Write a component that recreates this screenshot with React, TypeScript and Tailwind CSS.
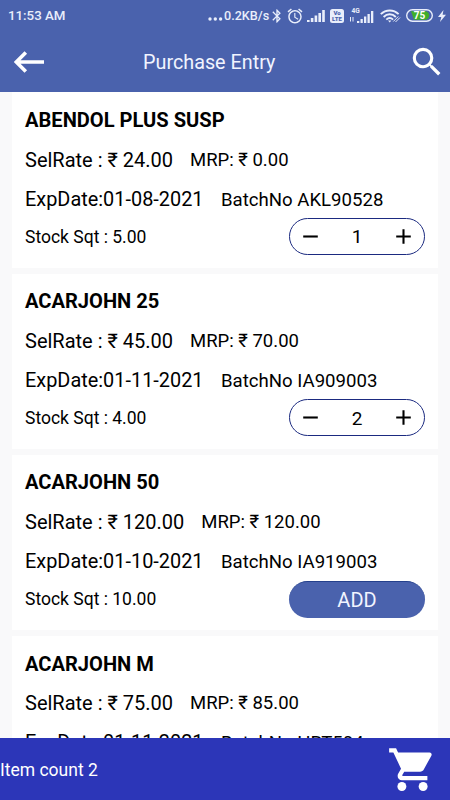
import { useState } from "react";
import { MdAdd, MdAlarm, MdBluetooth, MdRemove, MdSearch } from "react-icons/md";

interface Item {
  name: string;
  selRate: string;
  mrp: string;
  expDate: string;
  batchNo: string;
  stock: string;
  qty: number;
}

const initialItems: Item[] = [
  { name: "ABENDOL PLUS SUSP", selRate: "24.00", mrp: "0.00", expDate: "01-08-2021", batchNo: "AKL90528", stock: "5.00", qty: 1 },
  { name: "ACARJOHN 25", selRate: "45.00", mrp: "70.00", expDate: "01-11-2021", batchNo: "IA909003", stock: "4.00", qty: 2 },
  { name: "ACARJOHN 50", selRate: "120.00", mrp: "120.00", expDate: "01-10-2021", batchNo: "IA919003", stock: "10.00", qty: 0 },
  { name: "ACARJOHN M", selRate: "75.00", mrp: "85.00", expDate: "01-11-2021", batchNo: "HRT504", stock: "", qty: 0 },
];

function SignalBars() {
  return (
    <svg className="w-[18px] h-3 shrink-0" viewBox="0 0 18 12" fill="currentColor">
      <rect x="0" y="10" width="2.6" height="2" />
      <rect x="3.8" y="8" width="2.6" height="4" />
      <rect x="7.6" y="5.5" width="2.6" height="6.5" />
      <rect x="11.4" y="3" width="2.6" height="9" />
      <rect x="15.2" y="0" width="2.6" height="12" />
    </svg>
  );
}

function StatusBar() {
  return (
    <div className="flex items-center h-[31px] pl-2 pr-1 text-[#e9eefb]">
      <span className="text-[13.3px] font-medium leading-none">11:53 AM</span>
      <div className="flex items-center ml-auto">
        <svg className="w-[15px] h-3 mt-[3px] mr-px" viewBox="0 0 15 12" fill="currentColor">
          <circle cx="2" cy="8" r="1.7" />
          <circle cx="7.3" cy="8" r="1.7" />
          <circle cx="12.6" cy="8" r="1.7" />
        </svg>
        <span className="w-[46px] pt-px text-[12.6px] font-medium leading-none whitespace-nowrap">0.2KB/s</span>
        <MdBluetooth className="w-4 h-4 -ml-px mr-[-1px] shrink-0" />
        <MdAlarm className="w-[18px] h-[18px] ml-[2px] mr-[3px] shrink-0" />
        <SignalBars />
        <svg className="w-[14px] h-[14px] ml-[5px] mr-[5px] shrink-0" viewBox="0 0 14 14">
          <rect width="14" height="14" rx="2.5" fill="currentColor" />
          <g fill="#4a62ad" fontFamily="Roboto, sans-serif" fontWeight="900" fontSize="6" textAnchor="middle">
            <text x="7" y="6.3">Vo</text>
            <text x="7" y="12.2">LTE</text>
          </g>
        </svg>
        <svg className="w-[26px] h-4 mb-[2px] shrink-0" viewBox="0 0 26 16" fill="currentColor">
          <text x="2.5" y="5.7" fontFamily="Roboto, sans-serif" fontWeight="700" fontSize="6.6">4G</text>
          <path d="M1.5 14.5V10M4 10v4.5" stroke="currentColor" strokeWidth="1" />
          <rect x="8" y="14" width="2.3" height="2" />
          <rect x="11.5" y="12" width="2.3" height="4" />
          <rect x="15" y="9.5" width="2.3" height="6.5" />
          <rect x="18.5" y="7" width="2.3" height="9" />
          <rect x="22" y="4" width="2.3" height="12" />
        </svg>
        <svg className="w-[21px] h-[14px] ml-[5px] mr-[5px] shrink-0" viewBox="0 0 21 14" fill="none" stroke="currentColor" strokeWidth="1.9">
          <path d="M.8 5.2C5.8.2 13.6.2 18.6 5.2" />
          <path d="M3.6 8C7.2 4.4 12.2 4.4 15.8 8" />
          <path d="M6.3 10.6C8.5 8.5 11 8.5 13.1 10.6" />
          <path d="M8 11.6h3.4L9.7 13.6z" fill="currentColor" stroke="none" />
          <path d="M13.3 12.5L18.3 7.5M15.5 13L20 8.5" strokeWidth="1" />
        </svg>
        <svg className="w-7 h-[13px] mr-1 shrink-0" viewBox="0 0 28 13">
          <rect x=".7" y=".7" width="25.6" height="11.6" rx="5.8" fill="none" stroke="currentColor" strokeWidth="1.4" />
          <path d="M5 2.3h14a4.2 4.2 0 0 1 0 8.4H8z" fill="#3fae2a" />
          <text x="13.5" y="10.1" fill="#fff" fontFamily="Roboto, sans-serif" fontWeight="700" fontSize="10" textAnchor="middle">75</text>
        </svg>
        <svg className="w-2 h-3 shrink-0" viewBox="0 0 8 12" fill="currentColor">
          <path d="M5.5 0L0 7h3.3L2 12l6-7.3H4.6z" />
        </svg>
      </div>
    </div>
  );
}

function ItemCard({ item, onChange }: { item: Item; onChange: (qty: number) => void }) {
  return (
    <div className="h-[175.25px] shrink-0 bg-white px-[13px] pt-[7.4px] whitespace-nowrap">
      <h2 className="h-[39.8px] text-[20.1px] leading-10 font-bold">{item.name}</h2>
      <div className="flex h-10 leading-10">
        <span className="text-[20px] mr-[17px]">SelRate : ₹ {item.selRate}</span>
        <span className="text-[18.5px]">MRP: ₹ {item.mrp}</span>
      </div>
      <div className="flex h-[38.5px] leading-10">
        <span className="text-[19.9px] mr-[17.5px]">ExpDate:{item.expDate}</span>
        <span className="text-[18.6px]">BatchNo {item.batchNo}</span>
      </div>
      {item.stock && (
        <div className="flex items-center justify-between">
          <span className="pt-px text-[17.5px]">Stock Sqt : {item.stock}</span>
          {item.qty > 0 ? (
            <div className="flex items-center justify-between w-[136px] h-[37px] px-[8px] rounded-full border border-[#1b2a80]">
              <button onClick={() => onChange(item.qty - 1)}>
                <MdRemove className="w-[25px] h-[25px]" />
              </button>
              <span className="text-[19px] pt-[2px]">{item.qty}</span>
              <button onClick={() => onChange(item.qty + 1)}>
                <MdAdd className="w-[25px] h-[25px]" />
              </button>
            </div>
          ) : (
            <button
              onClick={() => onChange(1)}
              className="w-[136px] h-[37px] rounded-full bg-[#4a62ad] border-t border-[#24408c] text-[20px] text-[#f1f4ff]"
            >
              ADD
            </button>
          )}
        </div>
      )}
    </div>
  );
}

export default function App() {
  const [items, setItems] = useState(initialItems);

  const setQty = (index: number, qty: number) => {
    setItems((prev) => prev.map((it, i) => (i === index ? { ...it, qty } : it)));
  };

  const count = items.filter((it) => it.qty > 0).length;

  return (
    <div className="flex flex-col w-[450px] h-[800px] overflow-hidden bg-[#f9f9fa] text-black font-[Roboto,sans-serif]">
      {/* Header */}
      <header className="h-[92px] shrink-0 bg-[#4a62ad] text-white">
        <StatusBar />
        <div className="flex items-center h-[61px] pl-[14px] pr-1">
          <button>
            <svg className="w-[31px] h-[22px]" viewBox="0 0 31 22" fill="none" stroke="currentColor" strokeWidth="3.6">
              <path d="M2.5 11H30M11.8 1.5L2.3 11l9.5 9.5" />
            </svg>
          </button>
          <h1 className="ml-[98px] pt-[2px] text-[19.8px] text-[#f1f4ff]">Purchase Entry</h1>
          <button className="ml-auto">
            <MdSearch className="w-[38px] h-[38px]" />
          </button>
        </div>
      </header>

      {/* Items */}
      <main className="flex-1 min-h-0 overflow-hidden flex flex-col gap-[6px] px-3 pt-[0.4px]">
        {items.map((item, i) => (
          <ItemCard key={item.name} item={item} onChange={(qty) => setQty(i, qty)} />
        ))}
      </main>

      {/* Cart bar */}
      <footer className="flex items-center justify-between h-[62px] shrink-0 bg-[#2c36b8] text-white pr-3">
        <span className="pt-[2px] text-[17.5px]">Item count {count}</span>
        <svg className="w-[51px] h-[51px]" viewBox="0 0 24 24" fill="currentColor">
          <circle cx="7" cy="20" r="2.1" />
          <circle cx="17" cy="20" r="2.1" />
          <path d="M1 2v2h2l3.6 7.59-1.35 2.45c-.16.28-.25.61-.25.96 0 1.1.9 2 2 2h12v-2H7.42c-.14 0-.25-.11-.25-.25l.03-.12.9-1.63h7.45c.75 0 1.41-.41 1.75-1.03l3.58-6.49A1 1 0 0 0 20 4H5.21l-.94-2H1z" />
        </svg>
      </footer>
    </div>
  );
}
